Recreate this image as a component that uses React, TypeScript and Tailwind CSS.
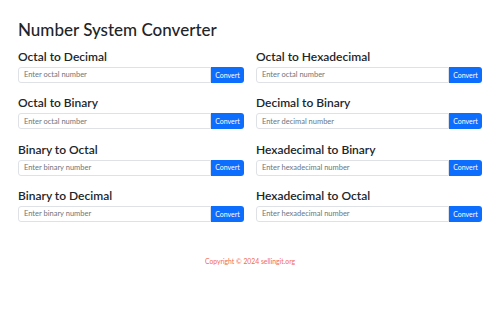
import React from "react";

const items = [
  ["Octal to Decimal", "Enter octal number"],
  ["Octal to Hexadecimal", "Enter octal number"],
  ["Octal to Binary", "Enter octal number"],
  ["Decimal to Binary", "Enter decimal number"],
  ["Binary to Octal", "Enter binary number"],
  ["Hexadecimal to Binary", "Enter hexadecimal number"],
  ["Binary to Decimal", "Enter binary number"],
  ["Hexadecimal to Octal", "Enter hexadecimal number"],
];

export default function App() {
  return (
    <div className="min-h-[333px] bg-white px-[18px] pt-[19px] font-['Lato',sans-serif] text-[#212529]">
      <h1 className="text-[17px] leading-[22px] font-medium">Number System Converter</h1>
      <div className="mt-[9px] grid grid-cols-2 gap-x-[12px] gap-y-[13.33px]">
        {items.map(([title, ph]) => (
          <div key={title}>
            <h4 className="text-[12px] leading-[14px] font-semibold">{title}</h4>
            <div className="mt-[3px] flex h-[16px]">
              <input
                className="min-w-0 flex-1 rounded-l-[3px] border border-[#dee2e6] px-[5px] text-[7.5px] outline-none placeholder:text-[#6c757d]"
                placeholder={ph}
              />
              <button className="w-[33px] rounded-r-[3px] bg-[#0d6efd] text-center text-[7px] text-white">Convert</button>
            </div>
          </div>
        ))}
      </div>
      <footer className="mt-[34px] text-center text-[6.8px] leading-[10px] text-[#f26b4f]">
        Copyright © 2024 sellingit.org
      </footer>
    </div>
  );
}
